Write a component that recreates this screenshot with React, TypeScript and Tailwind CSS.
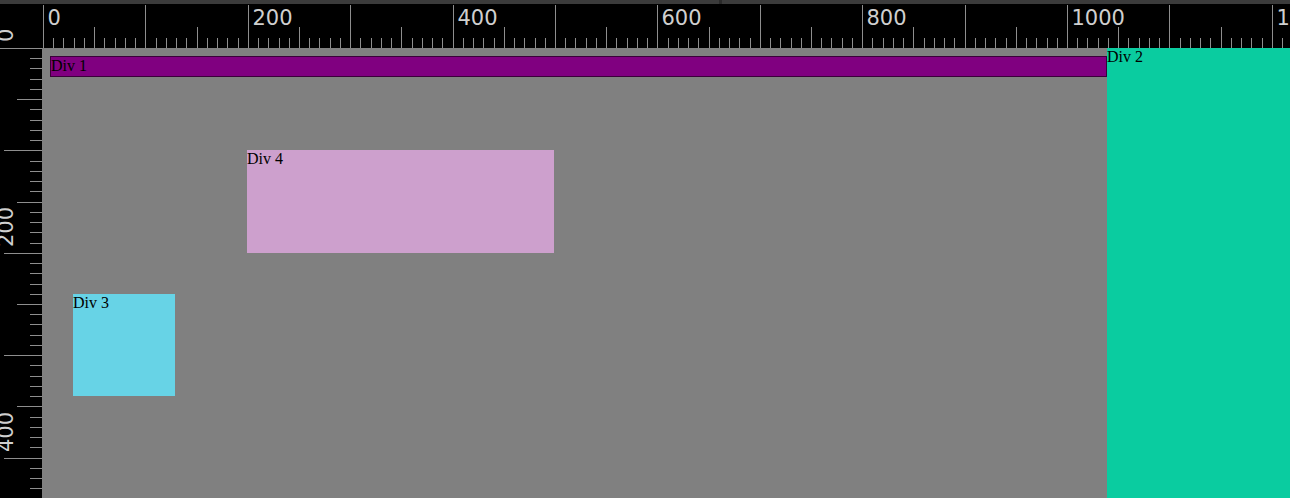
const SCALE = 1.024;

function HRuler() {
  const ticks = [];
  for (let i = 0; i <= 122; i++) {
    const x = Math.round(1 + i * 10.24) + 0.5;
    const y1 = i % 10 === 0 ? 1 : i % 5 === 0 ? 23 : 34;
    ticks.push(<line key={i} x1={x} x2={x} y1={y1} y2={44} stroke="#8e8e8e" strokeWidth={1} />);
  }
  const labels = [0, 200, 400, 600, 800, 1000, 1200].map((v) => (
    <text
      key={v}
      x={Math.round(1 + v * SCALE) + 4.5}
      y={21}
      fill="#cfcfcf"
      fontSize={21}
      fontFamily="'DejaVu Sans', sans-serif"
    >
      {v}
    </text>
  ));
  return (
    <svg width="100%" height="44" className="block">
      {ticks}
      {labels}
    </svg>
  );
}

function VRuler() {
  const ticks = [];
  for (let i = 0; i <= 45; i++) {
    const y = Math.round(i * 10.24) + 0.5;
    const x1 = i === 0 ? 0 : i % 10 === 0 ? 4 : i % 5 === 0 ? 17 : 30;
    ticks.push(<line key={i} x1={x1} x2={42} y1={y} y2={y} stroke="#8e8e8e" strokeWidth={1} />);
  }
  const labels = [200, 400].map((v) => (
    <text
      key={v}
      transform={`translate(13, ${Math.round(v * SCALE) - 6}) rotate(-90)`}
      fill="#cfcfcf"
      fontSize={21}
      fontFamily="'DejaVu Sans', sans-serif"
    >
      {v}
    </text>
  ));
  return (
    <svg width="42" height="450" className="block">
      {ticks}
      {labels}
    </svg>
  );
}

function Corner() {
  return (
    <svg width="42" height="44" className="block">
      <text
        transform="translate(13, 38) rotate(-90)"
        fill="#cfcfcf"
        fontSize={21}
        fontFamily="'DejaVu Sans', sans-serif"
      >
        0
      </text>
    </svg>
  );
}

export default function App() {
  return (
    <div className="w-[1290px] h-[498px] flex flex-col bg-black overflow-hidden font-['Liberation_Serif',serif] text-[16px] text-black">
      {/* window strip */}
      <div className="h-[4px] bg-[#3b3b3b] flex">
        <div className="w-[719px]" />
        <div className="w-[3px] bg-[#2a2a2a]" />
      </div>

      {/* top ruler */}
      <div className="flex h-[44px]">
        <Corner />
        <div className="flex-1">
          <HRuler />
        </div>
      </div>

      {/* body */}
      <div className="flex flex-1">
        <VRuler />
        <div className="relative w-[1065px] bg-[#808080]">
          <div className="absolute left-[8px] top-[8px] w-[1057px] h-[21px] bg-[#800080] border border-[#3a003a] leading-[18px]">
            Div 1
          </div>
          <div className="absolute left-[205px] top-[102px] w-[307px] h-[103px] bg-[#cda0cd] leading-[18px]">Div 4</div>
          <div className="absolute left-[31px] top-[246px] w-[102px] h-[102px] bg-[#67d3e6] leading-[18px]">Div 3</div>
        </div>
        <div className="flex-1 bg-[#0acca0] leading-[17px]">Div 2</div>
      </div>
    </div>
  );
}
